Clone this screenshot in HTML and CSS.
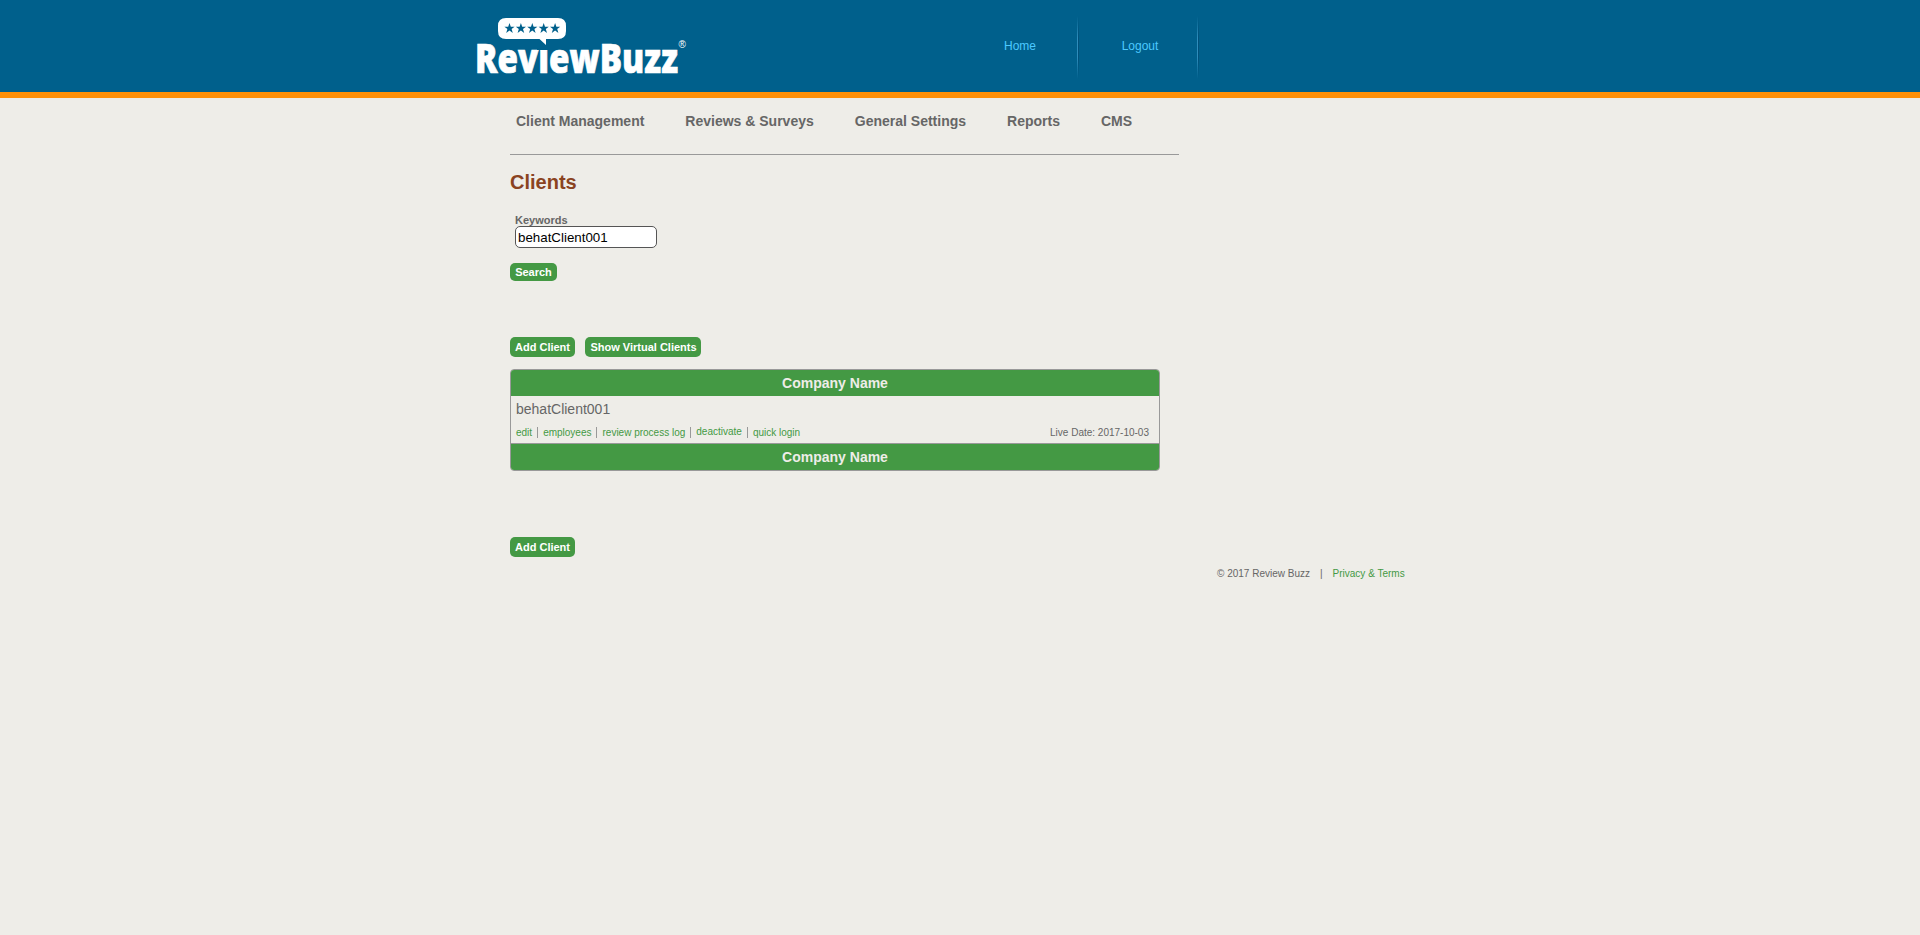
FILE: index.html
```
<!DOCTYPE html>
<html lang="en">
<head>
<meta charset="utf-8">
<title>Clients</title>
<link rel="stylesheet" href="styles.css">
</head>
<body>
<header class="header">
  <svg class="logo" width="210" height="62" viewBox="0 0 210 62" role="img">
    <text class="wordmark" x="-2" y="57" textLength="203" lengthAdjust="spacingAndGlyphs">ReviewBuzz</text>
    <rect class="cover" x="60" y="18" width="13" height="16"/>
    <path class="bubble" d="M29 2h52q8 0 8 8v5q0 8-8 8H69v6L62.500 23H29q-8 0-8-8v-5q0-8 8-8z"/>
    <g class="stars">
      <path id="star" d="M32.500 7l1.300 3.800h3.800l-3 2.300 1.200 3.800-3.300-2.300-3.300 2.300 1.200-3.800-3-2.300h3.800z"/>
      <use href="#star" x="11.400"/>
      <use href="#star" x="22.800"/>
      <use href="#star" x="34.200"/>
      <use href="#star" x="45.600"/>
    </g>
    <text class="reg" x="201.500" y="32">®</text>
  </svg>
  <nav class="top-links">
    <a>Home</a>
    <a>Logout</a>
  </nav>
</header>
<main class="content">
  <nav class="menu">
    <a>Client Management</a>
    <a>Reviews &amp; Surveys</a>
    <a>General Settings</a>
    <a>Reports</a>
    <a>CMS</a>
  </nav>
  <h1 class="title">Clients</h1>
  <form class="search">
    <label class="label" for="kw">Keywords</label>
    <input class="field" id="kw" type="text" value="behatClient001">
    <button class="btn btn-search" type="button">Search</button>
  </form>
  <div class="actions">
    <a class="btn">Add Client</a>
    <a class="btn btn-wide">Show Virtual Clients</a>
  </div>
  <section class="table">
    <div class="head">Company Name</div>
    <div class="row">
      <div class="name">behatClient001</div>
      <div class="meta">
        <div class="links">
          <a>edit</a><a>employees</a><a>review process log</a><a><span class="raised">deactivate</span></a><a>quick login</a>
        </div>
        <span>Live Date: 2017-10-03</span>
      </div>
    </div>
    <div class="head">Company Name</div>
  </section>
  <div class="actions actions-bottom">
    <a class="btn">Add Client</a>
  </div>
</main>
<footer class="footer">
  <span>© 2017 Review Buzz</span><span>|</span><a>Privacy &amp; Terms</a>
</footer>
</body>
</html>
```
FILE: styles.css
```
* { box-sizing: border-box; }
body {
  margin: 0;
  background: #eeede8;
  color: #666;
  font-family: "Liberation Sans", Arial, sans-serif;
}
.header {
  display: flex;
  height: 98px;
  padding: 16px 0 0 477px;
  background: #00608c;
  border-bottom: 6px solid #ff9008;
}
.logo { overflow: visible; flex: none; }
.bubble { fill: #fff; }
.stars, .cover { fill: #00608c; }
.wordmark {
  fill: #fff;
  stroke: #fff;
  stroke-width: 0.7px;
  font: 800 41px "Open Sans", sans-serif;
}
.reg { fill: #fff; font: 10px "Liberation Sans", sans-serif; }
.top-links {
  display: flex;
  height: 63px;
  margin-left: 272px;
  font-size: 12px;
  line-height: 60px;
  color: #4cc9ff;
}
.top-links a {
  width: 120px;
  padding-left: 2px;
  text-align: center;
  background:
    linear-gradient(transparent, #2f8dbb 35%, #2f8dbb 65%, transparent) right 1px top / 1px 100% no-repeat,
    linear-gradient(transparent, #00507a 35%, #00507a 65%, transparent) right top / 1px 100% no-repeat;
}
.content { width: 669px; margin-left: 510px; }
.menu {
  display: flex;
  gap: 41px;
  height: 57px;
  padding: 15px 6px 0;
  border-bottom: 1px solid #999;
  font-size: 14px;
  font-weight: bold;
  line-height: 16px;
}
.title {
  margin: 16px 0 21px;
  color: #8a431f;
  font-size: 20px;
  line-height: 23px;
}
.search { display: flex; flex-direction: column; align-items: flex-start; }
.label {
  margin: 0 0 1px 5px;
  font-size: 11px;
  font-weight: bold;
  line-height: 10px;
}
.field {
  width: 142px;
  height: 22px;
  margin: 0 0 15px 5px;
  padding: 0 2px;
  border: 1px solid #555;
  border-radius: 5px;
  background: #fff;
  color: #000;
  font: 13.333px "Liberation Sans", Arial, sans-serif;
}
.btn {
  width: 65px;
  height: 20px;
  padding: 0;
  border: 0;
  border-radius: 5px;
  background: #449944;
  color: #fff;
  font: bold 11px/20px "Liberation Sans", Arial, sans-serif;
  text-align: center;
}
.btn-search { width: 47px; height: 18px; line-height: 18px; }
.btn-wide { width: 116px; padding-left: 1px; }
.actions { display: flex; gap: 10px; margin-top: 56px; }
.table {
  width: 650px;
  margin-top: 12px;
  border: 1px solid #999;
  border-radius: 4px;
  overflow: hidden;
}
.head {
  height: 26px;
  background: #449944;
  color: #eeede8;
  font-size: 14px;
  font-weight: bold;
  line-height: 26px;
  text-align: center;
}
.row {
  height: 48px;
  padding: 5px 10px 0 5px;
  border-bottom: 1px solid #999;
}
.name { height: 26px; font-size: 14px; line-height: 16px; }
.meta {
  display: flex;
  justify-content: space-between;
  font-size: 10px;
  line-height: 12px;
}
.links { display: flex; color: #449944; }
.links a { height: 11px; padding-right: 5px; margin-right: 5px; border-right: 1px solid #999; }
.links a:last-child { border: 0; }
.raised { position: relative; top: -1px; }
.actions-bottom { margin-top: 66px; }
.footer {
  display: flex;
  gap: 10px;
  margin: 11px 0 0 1217px;
  font-size: 10px;
  line-height: 12px;
}
.footer a { color: #449944; }
```
